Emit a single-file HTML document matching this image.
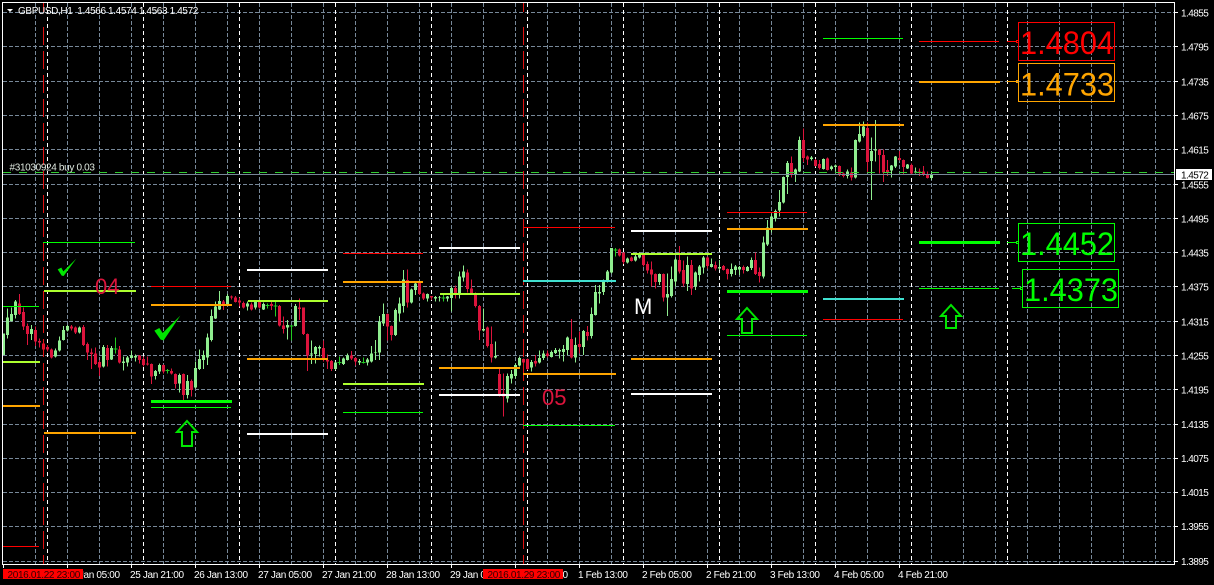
<!DOCTYPE html>
<html><head><meta charset="utf-8"><title>GBPUSD,H1</title>
<style>
html,body{margin:0;padding:0;background:#000;width:1214px;height:585px;overflow:hidden}
svg{display:block}
text{font-family:"Liberation Sans",sans-serif}
.a{font-size:10px;fill:#fff;letter-spacing:-.55px}
.t{font-size:10px;fill:#fff;letter-spacing:-.34px}
.big{font-size:32px}
.c{shape-rendering:crispEdges;fill:none}
</style></head><body>
<svg width="1214" height="585" viewBox="0 0 1214 585" xmlns="http://www.w3.org/2000/svg">
<rect width="1214" height="585" fill="#000"/>
<!-- grid -->
<path class="c" stroke="#778899" stroke-dasharray="4 2" d="M3 12.5H1174M3 46.5H1174M3 81.5H1174M3 115.5H1174M3 149.5H1174M3 184.5H1174M3 218.5H1174M3 252.5H1174M3 286.5H1174M3 321.5H1174M3 355.5H1174M3 389.5H1174M3 424.5H1174M3 458.5H1174M3 492.5H1174M3 526.5H1174M3 561.5H1174"/>
<path class="c" stroke="#778899" stroke-dasharray="4 2" d="M35.5 3V564M67.5 3V564M99.5 3V564M131.5 3V564M163.5 3V564M195.5 3V564M227.5 3V564M259.5 3V564M291.5 3V564M323.5 3V564M355.5 3V564M387.5 3V564M419.5 3V564M451.5 3V564M483.5 3V564M515.5 3V564M547.5 3V564M579.5 3V564M611.5 3V564M643.5 3V564M675.5 3V564M707.5 3V564M739.5 3V564M771.5 3V564M803.5 3V564M835.5 3V564M867.5 3V564M899.5 3V564M931.5 3V564M963.5 3V564M995.5 3V564M1027.5 3V564M1059.5 3V564M1091.5 3V564M1123.5 3V564M1155.5 3V564"/>
<path class="c" stroke="#fff" stroke-dasharray="4 3" d="M47.5 3V564M143.5 3V564M239.5 3V564M335.5 3V564M431.5 3V564M527.5 3V564M623.5 3V564M719.5 3V564M815.5 3V564M911.5 3V564M1007.5 3V564"/>
<!-- candles A -->
<g transform="translate(.17 220) scale(.33333)" class="c">
<path stroke="#90ee90" stroke-width="3" d="M10 340V405M22 265V355M34 262V305M46 240V295M94 315V360M166 385V413M178 350V395M190 318V362M202 315V335M238 320V340M310 375V443M334 378V420M370 410V452M382 408V440M394 392V416M406 403V425M466 450V478M478 430V462M538 460V518M562 465V535M586 425V505M598 388V450M610 392V447M622 340V435M634 268V365M646 245V297M658 213V270M682 222V255M742 245V272M766 240V268M790 248V270M862 300V358M886 252V320M934 362V432M946 378V430M958 376V410M1006 425V450M1030 412V435M1042 400V422M1078 417V435M1102 414V436M1114 378V428M1126 360V420M1138 288V420M1150 250V318M1186 265V348M1198 232V305"/>
<path stroke="#90ee90" stroke-width="9" d="M10 340V405M22 292V345M34 282V303M46 245V285M94 327V342M166 392V410M178 361V392M190 330V360M202 318V332M238 323V338M310 381V440M334 384V418M370 425V429M382 412V428M394 406V414M406 408V412M466 453V468M478 435V455M538 465V490M562 483V525M586 444V503M598 417V447M610 405V420M622 353V413M634 288V360M646 260V295M658 243V268M682 228V252M742 250V260M766 245V263M790 252V268M862 315V323M886 258V318M934 400V403M946 381V402M958 381V386M1006 427V447M1030 416V432M1042 406V420M1078 423V428M1102 419V428M1114 400V425M1126 396V398M1138 305V398M1150 282V310M1186 270V345M1198 250V280"/>
<path stroke="#22cc22" stroke-width="3" d="M346 353V400M340 387H352M502 447V460M496 452H508M802 250V265M796 257H808M826 245V290M820 258H832M874 315V362M868 318H880M1018 410V435M1012 428H1024M1090 412V430M1084 427H1096"/>
<path stroke="#dc143c" stroke-width="3" d="M58 222V285M70 262V330M82 310V375M106 320V378M118 355V382M130 365V405M142 375V395M154 385V415M214 315V332M226 320V342M250 315V378M262 368V420M274 385V447M286 382V435M298 420V468M322 375V440M358 378V430M418 405V430M430 410V440M442 410V436M454 430V492M490 433V460M514 445V463M526 460V505M550 460V540M574 478V530M670 240V270M694 226V238M706 228V248M718 232V260M730 245V265M754 248V272M778 240V265M814 245V270M838 255V320M850 290V340M898 235V300M910 262V345M922 340V453M970 362V425M982 403V447M994 420V453M1054 393V420M1066 412V437M1162 280V362M1174 316V362"/>
<path stroke="#dc143c" stroke-width="9" d="M58 250V282M70 276V320M82 318V342M106 330V365M118 363V368M130 370V388M142 381V388M154 388V413M214 319V326M226 323V338M250 321V375M262 372V398M274 398V402M286 400V432M298 426V442M322 384V420M358 388V428M418 407V420M430 417V435M442 430V434M454 432V470M490 435V455M514 453V461M526 462V492M550 462V525M574 483V510M670 244V252M694 229V233M706 233V246M718 242V247M730 249V262M754 253V268M778 245V263M814 252V258M838 258V317M850 316V327M898 262V267M910 263V342M922 342V406M970 384V420M982 420V425M994 423V447M1054 406V416M1066 414V425M1162 282V320M1174 318V345"/>
</g>
<!-- candles B -->
<g transform="translate(400.17 220) scale(.33333)" class="c">
<path stroke="#90ee90" stroke-width="3" d="M10 150V278M34 205V250M46 185V225M82 220V245M106 228V245M118 228V245M142 228V245M154 200V275M178 155V235M190 136V185M250 265V335M286 365V415M322 460V548M334 450V490M346 430V475M358 410V440M394 420V455M418 392V430M430 392V420M454 392V412M466 384V402M478 385V415M490 375V425M502 350V405M526 352V428M550 330V405M574 262V355M586 195V287M598 195V250M610 178V225M622 150V188M634 84V160M682 113V130M706 100V125M718 98V115M778 160V195M802 160V288M814 140V232M826 112V200M862 110V213M886 155V210M898 135V185M910 108V160M934 115V142M958 120V150M994 130V170M1006 135V165M1018 138V165M1042 138V155M1054 112V150M1090 50V175M1102 0V78"/>
<path stroke="#90ee90" stroke-width="9" d="M10 178V258M34 208V248M46 190V210M82 222V236M106 231V236M118 232V234M142 230V236M154 204V234M178 170V220M190 155V172M250 327V332M286 408V413M322 468V535M334 462V476M346 435V468M358 414V436M394 426V443M418 414V428M430 400V414M454 396V411M466 390V399M478 390V394M490 387V396M502 353V390M526 375V412M550 333V381M574 282V348M586 216V285M598 216V221M610 185V216M622 155V185M634 84V158M682 116V128M706 110V122M718 103V113M778 162V186M802 222V232M814 177V228M826 118V184M862 135V192M886 158V200M898 140V165M910 113V142M934 132V141M958 141V146M994 147V162M1006 140V150M1018 141V148M1042 141V153M1054 120V144M1090 68V170M1102 22V73"/>
<path stroke="#22cc22" stroke-width="3" d="M130 225V245M124 234H136M646 84V110M640 90H652"/>
<path stroke="#dc143c" stroke-width="3" d="M22 148V262M58 185V225M70 218V240M94 228V240M166 196V235M202 148V218M214 178V225M226 218V262M238 255V360M262 320V382M274 320V428M298 445V530M310 460V590M370 415V440M382 415V450M406 405V440M442 392V412M514 297V415M538 335V400M562 318V362M658 86V110M670 97V132M694 110V125M730 100V140M742 125V160M754 125V200M766 160V205M790 160V245M838 78V160M850 122V200M874 120V225M922 110V145M946 125V152M970 135V152M982 145V178M1030 137V160M1066 98V165M1078 142V188"/>
<path stroke="#dc143c" stroke-width="9" d="M22 180V248M58 188V222M70 220V236M94 228V233M166 204V220M202 158V207M214 205V220M226 222V258M238 258V332M262 323V378M274 372V412M298 462V522M310 520V530M370 417V428M382 417V447M406 423V430M442 400V408M514 357V413M538 372V381M562 336V348M658 88V106M670 97V126M694 113V123M730 104V135M742 132V152M754 148V164M766 162V186M790 162V232M838 120V155M850 150V190M874 135V205M922 113V138M946 135V145M970 138V150M982 147V162M1030 141V150M1066 120V162M1078 156V168"/>
</g>
<!-- candles C -->
<g transform="translate(720.17 100) scale(.33333)" class="c">
<path stroke="#90ee90" stroke-width="3" d="M154 340V398M166 328V365M178 270V350M190 230V310M202 183V282M226 205V246M238 110V216M274 168V182M310 175V208M334 197V212M346 194V215M382 208V236M406 118V236M418 67V128M430 65V112M454 113V300M466 60V185M514 195V233M526 168V204M562 192V207M586 203V220M634 215V240"/>
<path stroke="#90ee90" stroke-width="9" d="M154 350V385M166 333V355M178 306V332M190 231V308M202 189V231M226 209V225M238 120V214M274 173V177M310 177V207M334 200V207M346 197V201M382 214V228M406 120V233M418 102V124M430 80V108M454 153V183M466 149V152M514 197V212M526 170V200M562 194V205M586 214V218M634 222V234"/>
<path stroke="#dc143c" stroke-width="3" d="M214 170V232M250 85V186M262 166V195M286 177V200M298 180V208M322 172V212M358 197V228M370 218V232M394 202V242M442 68V218M478 148V220M490 148V246M502 180V228M538 153V182M550 178V222M574 190V222M598 205V228M610 198V228M622 215V236"/>
<path stroke="#dc143c" stroke-width="9" d="M214 189V224M250 120V174M262 170V179M286 180V198M298 192V204M322 175V210M358 198V222M370 220V228M394 217V232M442 84V186M478 148V165M490 165V218M502 210V216M538 174V180M550 180V201M574 195V220M598 214V218M610 215V225M622 222V234"/>
</g>
<!-- order lines -->
<path class="c" stroke="#32cd32" stroke-dasharray="8 8" d="M3 172.5H1174"/>
<path class="c" stroke="#778899" d="M3 174.5H1174"/>
<!-- red verticals -->
<path class="c" stroke="#e01010" stroke-dasharray="18 6" d="M43.5 27V564M523.5 27V564"/>
<path class="c" stroke="#e01010" d="M43.5 3V12M523.5 3V12"/>
<!-- level lines -->
<g class="c">
<path stroke="#00ff00" d="M43 242.5H135M3 306.5H39M151 407.5H231M343 412.5H423M523 425.5H615M727 335.5H807M823 38.5H903M919 288.5H999M1012 288.5H1020"/>
<path stroke="#ff0000" d="M151 286.5H231M343 253.5H423M523 227.5H615M727 212.5H807M823 319.5H903M919 41.5H999M1007 41.5H1016M3 546.5H39"/>
<path stroke="#ffa500" d="M1007 81.5H1016"/>
<path stroke="#00ff00" d="M1007 242.5H1016"/>
<path stroke="#ffa500" stroke-width="2" d="M44 433H136M3 406H40M151 305H232M247 359H328M343 282H423M439 368H520M523 374H616M631 359H712M727 229H808M823 125H904M919 82H1000"/>
<path stroke="#adff2f" stroke-width="2" d="M44 291H136M3 362H40M248 301H328M343 384H424M440 294H520M631 254H712"/>
<path stroke="#ffffff" stroke-width="2" d="M247 270H328M247 434H328M439 248H520M439 395H520M631 231H712M631 394H712"/>
<path stroke="#40e0d0" stroke-width="2" d="M523 281H616M823 299H904"/>
<path stroke="#00ff00" stroke-width="3" d="M151 401.5H232M727 291.5H808M919 242.5H1000"/>
</g>
<!-- check marks -->
<g transform="translate(0 220) scale(.33333)" fill="#00e600">
<polygon points="173,148 184,143 190,154 229,116 191,168 185,167"/>
<polygon points="463,332 478,324 488,339 541,287 491,361 482,359"/>
</g>
<!-- arrows -->
<g fill="none" stroke="#00e600" stroke-width="2" stroke-linejoin="miter">
<path transform="translate(187 421)" d="M0 0L10 11H5V25H-5V11H-10Z"/>
<path transform="translate(747 308)" d="M0 0L10 11H5V25H-5V11H-10Z"/>
<path transform="translate(951 305)" d="M0 0L10 11H5V23H-5V11H-10Z"/>
</g>
<!-- texts -->
<text x="95" y="294" font-size="22" fill="#dc143c">04</text>
<text x="542" y="405" font-size="22" fill="#dc143c">05</text>
<text x="634" y="314" font-size="22" fill="#fff">M</text>
<polygon points="7,9 13,9 10,12" fill="#fff"/>
<text x="18" y="14" class="t" style="letter-spacing:-.37px" xml:space="preserve">GBPUSD,H1  1.4566 1.4574 1.4563 1.4572</text>
<text x="9.5" y="170.5" class="t" style="fill:#dfe8df">#31030924 buy 0.03</text>
<!-- value boxes -->
<g fill="none">
<rect x="1018.5" y="22.5" width="96" height="38" stroke="#ff0000"/>
<rect x="1018.5" y="63.5" width="96" height="38" stroke="#ffa500"/>
<rect x="1018.5" y="223.5" width="96" height="38" stroke="#00ff00"/>
<rect x="1022.5" y="269.5" width="96" height="38" stroke="#00ff00"/>
<rect x="1016.5" y="40.5" width="2" height="2" stroke="#ff0000"/>
<rect x="1016.5" y="80.5" width="2" height="2" stroke="#ffa500"/>
<rect x="1016.5" y="241.5" width="2" height="2" stroke="#00ff00"/>
<rect x="1020.5" y="287.5" width="2" height="2" stroke="#00ff00"/>
</g>
<text x="1020" y="54" class="big" fill="#ff0000" textLength="94" lengthAdjust="spacingAndGlyphs">1.4804</text>
<text x="1020" y="95.5" class="big" fill="#ffa500" textLength="94" lengthAdjust="spacingAndGlyphs">1.4733</text>
<text x="1020" y="255" class="big" fill="#00ff00" textLength="94" lengthAdjust="spacingAndGlyphs">1.4452</text>
<text x="1024" y="301" class="big" fill="#00ff00" textLength="94" lengthAdjust="spacingAndGlyphs">1.4373</text>
<!-- frame -->
<path class="c" stroke="#fff" d="M2.5 2.5H1174.5V564.5H2.5Z"/>
<!-- axis ticks -->
<path class="c" stroke="#fff" d="M1175 12.5h3M1175 46.5h3M1175 81.5h3M1175 115.5h3M1175 149.5h3M1175 184.5h3M1175 218.5h3M1175 252.5h3M1175 286.5h3M1175 321.5h3M1175 355.5h3M1175 389.5h3M1175 424.5h3M1175 458.5h3M1175 492.5h3M1175 526.5h3M1175 561.5h3M3.5 565v3M67.5 565v3M131.5 565v3M195.5 565v3M259.5 565v3M323.5 565v3M387.5 565v3M451.5 565v3M515.5 565v3M579.5 565v3M643.5 565v3M707.5 565v3M771.5 565v3M835.5 565v3M899.5 565v3"/>
<!-- price axis -->
<g class="a">
<text x="1181" y="16.5">1.4855</text>
<text x="1181" y="50.5">1.4795</text>
<text x="1181" y="85.5">1.4735</text>
<text x="1181" y="119.5">1.4675</text>
<text x="1181" y="153.5">1.4615</text>
<text x="1181" y="188.5">1.4555</text>
<text x="1181" y="222.5">1.4495</text>
<text x="1181" y="256.5">1.4435</text>
<text x="1181" y="290.5">1.4375</text>
<text x="1181" y="325.5">1.4315</text>
<text x="1181" y="359.5">1.4255</text>
<text x="1181" y="393.5">1.4195</text>
<text x="1181" y="428">1.4135</text>
<text x="1181" y="462">1.4075</text>
<text x="1181" y="496">1.4015</text>
<text x="1181" y="530">1.3955</text>
<text x="1181" y="565">1.3895</text>
</g>
<rect x="1176" y="169" width="36" height="11" fill="#fff"/>
<text x="1181" y="178.5" class="a" style="fill:#000">1.4572</text>
<!-- time axis -->
<g class="t">
<text x="66" y="578">25 Jan 05:00</text>
<text x="130" y="578">25 Jan 21:00</text>
<text x="194" y="578">26 Jan 13:00</text>
<text x="258" y="578">27 Jan 05:00</text>
<text x="322" y="578">27 Jan 21:00</text>
<text x="386" y="578">28 Jan 13:00</text>
<text x="450" y="578">29 Jan 05:00</text>
<text x="514" y="578">29 Jan 21:00</text>
<text x="578" y="578">1 Feb 13:00</text>
<text x="642" y="578">2 Feb 05:00</text>
<text x="706" y="578">2 Feb 21:00</text>
<text x="770" y="578">3 Feb 13:00</text>
<text x="834" y="578">4 Feb 05:00</text>
<text x="898" y="578">4 Feb 21:00</text>
</g>
<rect x="3" y="569" width="80" height="10" fill="#ff0000"/>
<rect x="483" y="569" width="80" height="10" fill="#ff0000"/>
<text x="7.5" y="578" class="t" style="fill:#300">2016.01.22 23:00</text>
<text x="487.5" y="578" class="t" style="fill:#300">2016.01.29 23:00</text>
</svg>
</body></html>
